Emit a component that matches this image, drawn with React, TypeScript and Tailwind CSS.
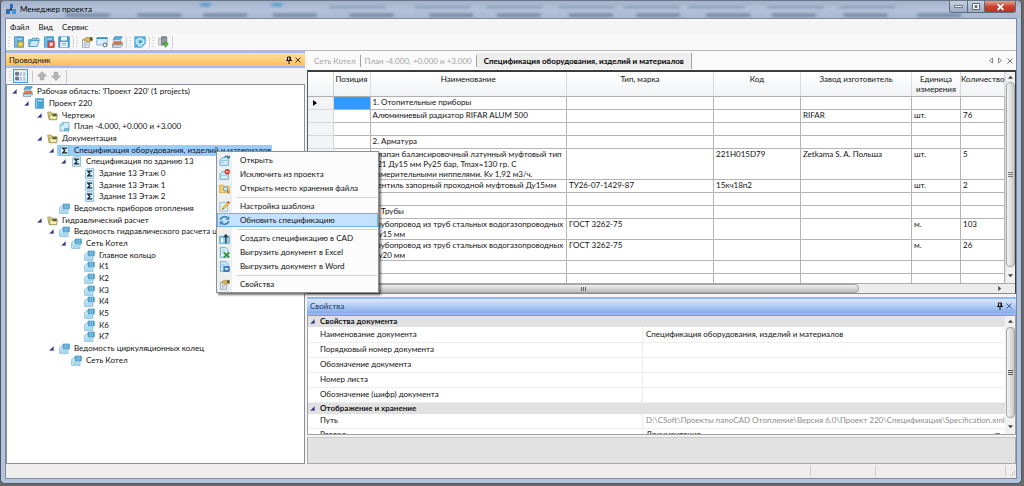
import { useState } from 'react';
import type { ReactNode } from 'react';

type IconName =
    | 'stack' | 'book' | 'folder' | 'sheet' | 'sigma' | 'report'
    | 'bookNew' | 'openFolder' | 'bookDelete' | 'save' | 'props' | 'window' | 'cad' | 'import'
    | 'tree' | 'up' | 'down'
    | 'open' | 'exclude' | 'locate' | 'template' | 'refresh' | 'toCad' | 'excel' | 'word';

const page = <path d="M4 1h10v14H2V4z" fill="#d8effb" stroke="#5fa9cf" />;
const blueSheet = <path d="M5 2h9.500v12.500H1.500V6z" fill="#d3edf9" stroke="#4f9fc8" />;
const blueBook = (
    <>
        <path d="M2 1h12v14H2z" fill="#4aa3d8" stroke="#3a8cc0" />
        <path d="M4 1v14" stroke="#c2e4f6" />
        <path d="M6 4h6" stroke="#eaf6fd" strokeWidth="1.500" />
    </>
);
const handCard = (
    <>
        <path d="M2 5h9v10H2z" fill="#eef1f6" stroke="#8290a3" />
        <path d="M4 9h5M4 11h5M4 13h3" stroke="#8fa3bd" />
        <path d="M3 5l4-3h8v4l-5 2-3-1z" fill="#dcb45c" stroke="#a38645" />
        <path d="M12 2h3v4h-3z" fill="#4a5a33" />
    </>
);

const ICONS: Record<IconName, ReactNode> = {
    stack: (
        <>
            <path d="M5 1h10l-3 4H3z" fill="#5cb0de" stroke="#2a7fb4" />
            <path d="M3 5h10v2H3z" fill="#fff" stroke="#8a9aa8" />
            <path d="M4 8h11l-2 3H2z" fill="#e8804a" stroke="#b85d33" />
            <path d="M2 12h11l2-2v3l-2 2H2z" fill="#eaf4fa" stroke="#4d7b9a" />
        </>
    ),
    book: blueBook,
    folder: (
        <>
            <path d="M1 3h5l1 2h7v9H3z" fill="#e2d684" stroke="#8c8546" />
            <path d="M4 7h11l-1 7H4z" fill="#f6efae" stroke="#8c8546" />
            <path d="M8 6h6v3H8z" fill="#4e5a3a" />
        </>
    ),
    sheet: (
        <>
            {blueSheet}
            <path d="M2 6h4V2" fill="none" stroke="#4f9fc8" />
            <path d="M8 11h6v3H8z" fill="#8ac8e6" stroke="#4f9fc8" />
        </>
    ),
    sigma: (
        <>
            {page}
            <path d="M11 5.500V4.500H5.500L8.500 8l-3 3.500H11v-1" fill="none" stroke="#10202c" strokeWidth="1.800" />
        </>
    ),
    report: (
        <>
            <path d="M1 7l3-3h9v11H1z" fill="#cdeaf7" stroke="#5aa8d0" />
            <path d="M6 1.500h9v7H6z" fill="#55a7d2" stroke="#3d8fbb" />
            <path d="M9 2v6M12 2v6" stroke="#a6d5ec" />
            <path d="M3 10.500h8M3 13h8" stroke="#7fc0e0" />
        </>
    ),
    bookNew: (
        <>
            {blueBook}
            <path d="M10 6l1.500 3 3.500.5-2.500 2.300.6 3.200-3.100-1.600L7 15l.600-3.200L5 9.500 8.500 9z" fill="#ffd84e" stroke="#e09a18" />
        </>
    ),
    openFolder: (
        <>
            <path d="M1 13V5h4l1-2h6v3" fill="#8fcbea" stroke="#2f85b5" />
            <path d="M1 14l3-8h11l-3 8z" fill="#c7e8f8" stroke="#2f85b5" />
            <path d="M12 2l3 2-1 2" fill="none" stroke="#2f85b5" />
        </>
    ),
    bookDelete: (
        <>
            {blueBook}
            <path d="M7 7h8v8H7z" fill="#e0503f" stroke="#b8382b" />
            <path d="M9 9l4 4M13 9l-4 4" stroke="#fff" strokeWidth="1.500" />
        </>
    ),
    save: (
        <>
            <path d="M1 1h14v14H1z" fill="#4a9fd0" stroke="#2f7fae" />
            <path d="M4 1h8v5H4z" fill="#e9f5fc" />
            <path d="M3 8h10v7H3z" fill="#f4fafd" />
            <path d="M5 10h6M5 12h6" stroke="#5aa5cf" />
        </>
    ),
    props: handCard,
    window: (
        <>
            <path d="M1 2h14v10H1z" fill="#d9eefa" stroke="#6aa3c6" />
            <path d="M1 3h14" stroke="#3b8fc2" strokeWidth="2" />
            <circle cx="12" cy="12" r="2.500" fill="#fff" stroke="#6b8397" strokeWidth="1.500" />
        </>
    ),
    cad: (
        <>
            <path d="M1 1h14v9l-5 5H1z" fill="#5eb6e6" stroke="#3f9bce" />
            <path d="M3 5h3v-2h4v2h3v5h-3v3H6v-3H3z" fill="#8fd0f2" stroke="#eef9ff" strokeWidth="1.200" />
            <path d="M7 6h3v3H7z" fill="#2f86bd" />
        </>
    ),
    import: (
        <>
            <path d="M2 3h5v9H2z" fill="#d9dcdf" stroke="#a9aeb2" />
            <path d="M6 1h7v11H6z" fill="#7f898e" stroke="#677075" />
            <path d="M8 3v8M11 3v8" stroke="#b4bcc1" />
            <path d="M10 8h3v2h2l-3.500 5L8 10h2z" fill="#58bd3b" stroke="#3c9228" />
        </>
    ),
    tree: (
        <>
            <path d="M1 2h4v4H1zM1 9h4v4H1z" fill="#7c8a96" stroke="#3d4b57" />
            <path d="M7 3h3M12 3h3M7 6h3M12 6h3M7 10h3M12 10h3M7 13h3M12 13h3" stroke="#5f7183" />
        </>
    ),
    up: <path d="M8 1l7 7h-4v6H5V8H1z" fill="#b3b3b3" stroke="#9c9c9c" />,
    down: <path d="M8 15l7-7h-4V2H5v6H1z" fill="#b3b3b3" stroke="#9c9c9c" />,
    open: (
        <>
            <path d="M1.500 7l3-3h9v11h-12z" fill="#d3edf9" stroke="#3b8fba" />
            <path d="M3 8h9M3 11h4" stroke="#6db6da" />
            <path d="M8 3c2-2 4-2 6 0M15 1v3h-3" fill="none" stroke="#27627f" strokeWidth="1.500" />
        </>
    ),
    exclude: (
        <>
            <path d="M1.500 7l3-3h9v11h-12z" fill="#d3edf9" stroke="#3b8fba" />
            <path d="M3 9h9" stroke="#6db6da" />
            <circle cx="12" cy="4" r="3.500" fill="#e8412c" stroke="#c02817" />
            <path d="M10 4h4" stroke="#fff" strokeWidth="1.500" />
        </>
    ),
    locate: (
        <>
            <path d="M1 3h5l1 2h8v9H1z" fill="#f5cf6c" stroke="#d29d38" />
            <circle cx="9.500" cy="8.500" r="3" fill="#d6efff" stroke="#7b9fb8" strokeWidth="1.500" />
            <path d="M12 11l3 4" stroke="#c06a22" strokeWidth="2" />
        </>
    ),
    template: (
        <>
            <path d="M1.500 2h11v13h-11z" fill="#e3f2fb" stroke="#6fa9ca" />
            <path d="M5 12l1-3 7-8 2 2-7 8z" fill="#f7c43a" stroke="#d99a2a" />
            <path d="M13 1l2 2" stroke="#d23c2b" strokeWidth="2.500" />
            <path d="M4 13l2-3 1 1z" fill="#33393e" />
        </>
    ),
    refresh: (
        <g fill="none" stroke="#3d86b4" strokeWidth="2.500">
            <path d="M2 7c1-5 8-6 11-2" />
            <path d="M14 9c-1 5-8 6-11 2" />
            <path d="M14 2v4h-4M2 14v-4h4" strokeWidth="2" />
        </g>
    ),
    toCad: (
        <>
            <path d="M1 5h14v10H1z" fill="#9dd2ec" stroke="#3b8fba" />
            <path d="M3 8h3v6H3z" fill="#eef9ff" />
            <path d="M10 15V5" stroke="#1f3a4a" strokeWidth="2" />
            <path d="M6 6l4-5 4 5z" fill="#1f3a4a" />
        </>
    ),
    excel: (
        <>
            <path d="M2 1h8l3 3v11H2z" fill="#e3f2fb" stroke="#3f93bd" />
            <path d="M4 5h5M4 8h3" stroke="#6db6da" />
            <path d="M7 8l8 7M15 8l-8 7" stroke="#2f9236" strokeWidth="2.500" />
        </>
    ),
    word: (
        <>
            <path d="M2 1h8l3 3v11H2z" fill="#d3edf9" stroke="#3f93bd" />
            <path d="M4 5h5M4 8h3" stroke="#6db6da" />
            <path d="M7 8h8v7H7z" fill="#3d83c4" stroke="#1f5d99" />
            <path d="M9 10l1 3 1-3 1 3 1-3" fill="none" stroke="#fff" />
        </>
    ),
};

const Icon = ({ name, size = 11 }: { name: IconName; size?: number }) => (
    <svg width={size} height={size} viewBox="0 0 16 16" className="shrink-0" aria-hidden="true">
        {ICONS[name]}
    </svg>
);

const Grip = () => (
    <svg width="2" height="11" viewBox="0 0 2 11" className="shrink-0" aria-hidden="true">
        <path d="M1 0v11" stroke="#b5b5b5" strokeWidth="1" strokeDasharray="1 2" />
    </svg>
);

const Pin = () => (
    <svg width="8" height="8" viewBox="0 0 8 8" aria-hidden="true">
        <path d="M2.500 1h3v3.500h-3z" fill="none" stroke="currentColor" />
        <path d="M5 1v3.500M1 4.500h6M4 5v3" stroke="currentColor" />
    </svg>
);

const Cross = () => (
    <svg width="8" height="8" viewBox="0 0 8 8" aria-hidden="true">
        <path d="M1.500 1.500l5 5M6.500 1.500l-5 5" stroke="currentColor" strokeWidth=".8" />
    </svg>
);

const Arrow = ({ d }: { d: string }) => (
    <svg width="5" height="5" viewBox="0 0 6 6" className="shrink-0" aria-hidden="true">
        <path d={d} fill="#444" />
    </svg>
);

const Expander = () => (
    <svg width="5" height="5" viewBox="0 0 5 5" className="shrink-0" aria-hidden="true">
        <path d="M4.500 .5v4h-4z" fill="#2c3180" stroke="#6a6fae" strokeWidth=".5" />
    </svg>
);

// Toolbar
interface Tool {
    icon: IconName;
    label: string;
}

const TOOL_GROUPS: Tool[][] = [
    [
        { icon: 'bookNew', label: 'Создать проект' },
        { icon: 'openFolder', label: 'Открыть проект' },
        { icon: 'bookDelete', label: 'Закрыть проект' },
        { icon: 'save', label: 'Сохранить' },
    ],
    [
        { icon: 'props', label: 'Свойства' },
        { icon: 'window', label: 'Настройки' },
        { icon: 'stack', label: 'Рабочая область' },
    ],
    [{ icon: 'cad', label: 'Чертеж' }],
    [{ icon: 'import', label: 'Импорт' }],
];

// Project tree, flattened
interface Node {
    level: number;
    icon: IconName;
    text: string;
    open?: boolean;
}

const INDENT = ['pl-[5px]', 'pl-[17px]', 'pl-[30px]', 'pl-[42px]', 'pl-[54px]', 'pl-[67px]'];

const NODES: Node[] = [
    { level: 0, icon: 'stack', text: "Рабочая область: 'Проект 220' (1 projects)", open: true },
    { level: 1, icon: 'book', text: 'Проект 220', open: true },
    { level: 2, icon: 'folder', text: 'Чертежи', open: true },
    { level: 3, icon: 'sheet', text: 'План -4.000, +0.000 и +3.000' },
    { level: 2, icon: 'folder', text: 'Документация', open: true },
    { level: 3, icon: 'sigma', text: 'Спецификация оборудования, изделий и материалов', open: true },
    { level: 4, icon: 'sigma', text: 'Спецификация по зданию 13', open: true },
    { level: 5, icon: 'sigma', text: 'Здание 13 Этаж 0' },
    { level: 5, icon: 'sigma', text: 'Здание 13 Этаж 1' },
    { level: 5, icon: 'sigma', text: 'Здание 13 Этаж 2' },
    { level: 3, icon: 'report', text: 'Ведомость приборов отопления' },
    { level: 2, icon: 'folder', text: 'Гидравлический расчет', open: true },
    { level: 3, icon: 'report', text: 'Ведомость гидравлического расчета циркуляционных колец', open: true },
    { level: 4, icon: 'report', text: 'Сеть Котел', open: true },
    { level: 5, icon: 'report', text: 'Главное кольцо' },
    { level: 5, icon: 'report', text: 'К1' },
    { level: 5, icon: 'report', text: 'К2' },
    { level: 5, icon: 'report', text: 'К3' },
    { level: 5, icon: 'report', text: 'К4' },
    { level: 5, icon: 'report', text: 'К5' },
    { level: 5, icon: 'report', text: 'К6' },
    { level: 5, icon: 'report', text: 'К7' },
    { level: 3, icon: 'report', text: 'Ведомость циркуляционных колец', open: true },
    { level: 4, icon: 'report', text: 'Сеть Котел' },
];

const HEADERS = ['Позиция', 'Наименование', 'Тип, марка', 'Код', 'Завод изготовитель', 'Единица измерения', 'Количество'];

interface Row {
    height: string;
    cells: string[];
}

const ROWS: Row[] = [
    { height: 'h-[13px]', cells: ['', '1. Отопительные приборы', '', '', '', '', ''] },
    { height: 'h-[13px]', cells: ['', 'Алюминиевый радиатор RIFAR ALUM 500', '', '', 'RIFAR', 'шт.', '76'] },
    { height: 'h-[13px]', cells: ['', '', '', '', '', '', ''] },
    { height: 'h-[13px]', cells: ['', '2. Арматура', '', '', '', '', ''] },
    { height: 'h-[31px]', cells: ['', 'Клапан балансировочный латунный муфтовый тип 221 Ду15 мм Ру25 бар, Tmax=130 гр. С измерительными ниппелями. Kv 1,92 м3/ч.', '', '221H015D79', 'Zetkama S. A. Польша', 'шт.', '5'] },
    { height: 'h-[13px]', cells: ['', 'Вентиль запорный проходной муфтовый Ду15мм', 'ТУ26-07-1429-87', '15кч18п2', '', 'шт.', '2'] },
    { height: 'h-[13px]', cells: ['', '', '', '', '', '', ''] },
    { height: 'h-[13px]', cells: ['', '3. Трубы', '', '', '', '', ''] },
    { height: 'h-[21px]', cells: ['', 'Трубопровод из труб стальных водогазопроводных Ду15 мм', 'ГОСТ 3262-75', '', '', 'м.', '103'] },
    { height: 'h-[21px]', cells: ['', 'Трубопровод из труб стальных водогазопроводных Ду20 мм', 'ГОСТ 3262-75', '', '', 'м.', '26'] },
    { height: 'h-[13px]', cells: ['', '', '', '', '', '', ''] },
    { height: 'h-[13px]', cells: ['', '', '', '', '', '', ''] },
];

const MENU: Tool[][] = [
    [
        { icon: 'open', label: 'Открыть' },
        { icon: 'exclude', label: 'Исключить из проекта' },
        { icon: 'locate', label: 'Открыть место хранения файла' },
    ],
    [
        { icon: 'template', label: 'Настройка шаблона' },
        { icon: 'refresh', label: 'Обновить спецификацию' },
    ],
    [
        { icon: 'toCad', label: 'Создать спецификацию в CAD' },
        { icon: 'excel', label: 'Выгрузить документ в Excel' },
        { icon: 'word', label: 'Выгрузить документ в Word' },
    ],
    [{ icon: 'props', label: 'Свойства' }],
];

const PROPERTY_GROUPS = [
    {
        title: 'Свойства документа',
        items: [
            { name: 'Наименование документа', value: 'Спецификация оборудования, изделий и материалов' },
            { name: 'Порядковый номер документа', value: '' },
            { name: 'Обозначение документа', value: '' },
            { name: 'Номер листа', value: '' },
            { name: 'Обозначение (шифр) документа', value: '' },
        ],
    },
    {
        title: 'Отображение и хранение',
        items: [
            { name: 'Путь', value: 'D:\\CSoft\\Проекты nanoCAD Отопление\\Версия 6.0\\Проект 220\\Спецификация\\Specification.xml', readOnly: true },
        ],
    },
];

const TitleBar = () => (
    <header className="relative flex h-[17px] shrink-0 items-start overflow-hidden bg-linear-to-b from-[#a3b3cb] via-[#b3c2d9] to-[#a9b9d2]">
        {/* Glass with the ribbon behind showing through */}
        <svg className="absolute inset-0 h-full w-full" preserveAspectRatio="none" viewBox="0 0 1024 18" aria-hidden="true">
            <defs>
                <filter id="glass"><feGaussianBlur stdDeviation="1.4" /></filter>
            </defs>
            <g filter="url(#glass)" fill="#5f7390" opacity=".6">
                {[65, 137, 203, 273, 350, 430, 498, 570, 638, 708, 774, 846, 920].map((x) => (
                    <rect key={x} x={x} y="13" width="44" height="4" />
                ))}
                {[200, 272].map((x) => <rect key={x} x={x} y="2" width="10" height="4" fill="#2f8fd0" />)}
                {[330, 415, 487, 560, 625, 690, 770, 842].map((x) => (
                    <rect key={x} x={x} y="5" width="56" height="3" opacity=".6" />
                ))}
            </g>
        </svg>
        <div className="relative flex flex-1 items-center gap-[4px] pl-[5px]">
            <svg width="10" height="12" viewBox="0 0 10 12" aria-hidden="true">
                <path d="M5 1v5M2 9l3-3 3 3" stroke="#1c2c45" strokeWidth="1.500" fill="none" />
                <path d="M4 1h3v4H4zM0 6h4v5H0z" fill="#2d6bb4" />
                <path d="M6 6h4v5H6z" fill="#4c93d6" />
            </svg>
            <h1 className="text-[8px] leading-[16px] text-black">Менеджер проекта</h1>
        </div>
        <div className="relative mr-[5px] flex h-[12px] overflow-hidden rounded-b-[3px] border border-t-0 border-[#5e6a7d]">
            <button aria-label="Свернуть" className="flex w-[18px] items-center justify-center border-r border-[#5e6a7d] bg-linear-to-b from-[#c6d0e0] to-[#9eacc3]">
                <svg width="9" height="5" viewBox="0 0 9 5"><path d="M.5 1.500h8v2h-8z" fill="#fff" stroke="#6b7588" /></svg>
            </button>
            <button aria-label="Развернуть" className="flex w-[17px] items-center justify-center border-r border-[#5e6a7d] bg-linear-to-b from-[#c6d0e0] to-[#9eacc3]">
                <svg width="8" height="7" viewBox="0 0 8 7"><path d="M.5.5h7v6h-7z" fill="#fff" stroke="#5b6578" /><path d="M3 2.500h2v2H3z" fill="#8795ab" stroke="#5b6578" /></svg>
            </button>
            <button aria-label="Закрыть" className="flex w-[30px] items-center justify-center bg-linear-to-b from-[#e2a293] via-[#c9442e] to-[#b83420]">
                <svg width="9" height="8" viewBox="0 0 9 8"><path d="M1.500 1l6 6M7.500 1l-6 6" stroke="#8b3428" strokeWidth="3" /><path d="M1.500 1l6 6M7.500 1l-6 6" stroke="#fff" strokeWidth="1.800" /></svg>
            </button>
        </div>
    </header>
);

const Explorer = ({ selected, onSelect }: { selected: number; onSelect: (i: number) => void }) => (
    <section className="flex w-[30%] min-w-[298px] max-w-[299px] flex-col bg-[#f4f4f4]">
        <div className="flex h-[17px] shrink-0 items-center border-y-2 border-[#9dbbfa] bg-linear-to-b from-[#ffe0a4] to-[#fdbe55] pr-[3px] pl-[3px]">
            <h2 className="flex-1 text-[8px] leading-[12px]">Проводник</h2>
            <button aria-label="Закрепить"><Pin /></button>
            <button aria-label="Закрыть панель" className="ml-px"><Cross /></button>
        </div>
        <div className="flex h-[16px] shrink-0 items-center gap-[2px] pl-[3px]">
            <Grip />
            <button aria-label="Дерево" className="flex h-[14px] w-[15px] items-center justify-center border border-[#3c9bf0] bg-[#e4f1fd]">
                <Icon name="tree" />
            </button>
            <span className="mx-[2px] h-[11px] w-px bg-[#c8c8c8]" />
            <button aria-label="Вверх" className="mr-[2px]"><Icon name="up" size={10} /></button>
            <button aria-label="Вниз"><Icon name="down" size={10} /></button>
            <span className="ml-[3px] h-[13px] w-px bg-[#c8c8c8]" />
        </div>
        <div className="flex-1 overflow-hidden border border-[#8e8f99] bg-white">
            <ul role="tree" className="grid h-[281px] auto-rows-fr pt-px">
                {NODES.map((node, i) => (
                    <li
                        key={i}
                        role="treeitem"
                        aria-level={node.level + 1}
                        aria-selected={i === selected}
                        onClick={() => onSelect(i)}
                        className={`flex min-h-0 items-center ${INDENT[node.level]}`}
                    >
                        <span className="w-[8px] shrink-0">{node.open && <Expander />}</span>
                        <span className={`flex shrink-0 items-center gap-[4px] pr-px pl-[2px] ${i === selected ? 'bg-[#99ccff]' : ''}`}>
                            <Icon name={node.icon} />
                            <span className="text-[8px] leading-[11px] whitespace-nowrap">{node.text}</span>
                        </span>
                    </li>
                ))}
            </ul>
        </div>
    </section>
);

const SpecTable = () => (
    <div className="flex min-h-0 flex-1 flex-col border-t-2 border-r border-b border-l border-[#3c3c3c] border-b-[#8a8a8a] border-l-[#55585c] bg-white">
        <div className="flex min-h-0 flex-1">
            <div className="min-w-0 flex-1 overflow-hidden">
                <table className="w-full table-fixed border-collapse text-[8px] leading-[10px]">
                    <colgroup>
                        <col className="w-[25px]" />
                        <col className="w-[37px]" />
                        <col />
                        <col className="w-[147px]" />
                        <col className="w-[87px]" />
                        <col className="w-[111px]" />
                        <col className="w-[49px]" />
                        <col className="w-[44px]" />
                    </colgroup>
                    <thead>
                        <tr className="h-[24px] bg-linear-to-b from-white to-[#f1f2f4] align-top">
                            <th className="border-r border-b border-[#d0d0d0] border-b-[#b0b0b0]" />
                            {HEADERS.map((h) => (
                                <th key={h} className="border-r border-b border-[#dcdcdc] border-b-[#b0b0b0] pt-[2px] font-normal">
                                    {h}
                                </th>
                            ))}
                        </tr>
                    </thead>
                    <tbody>
                        {ROWS.map((row, i) => (
                            <tr key={i} className={`${row.height} align-top`}>
                                <td className="border-r border-b border-[#d8d8d8] bg-[#f3f4f6] pt-[3px] pl-[5px]">
                                    {i === 0 && (
                                        <svg width="4" height="6" viewBox="0 0 4 6" aria-hidden="true"><path d="M0 0l4 3-4 3z" fill="#000" /></svg>
                                    )}
                                </td>
                                {row.cells.map((cell, j) => (
                                    <td
                                        key={j}
                                        className={`border-r border-b border-[#b4b4b4] pl-[2px] ${i === 0 && j === 0 ? 'bg-[#3399ff]' : ''}`}
                                    >
                                        {cell}
                                    </td>
                                ))}
                            </tr>
                        ))}
                    </tbody>
                </table>
            </div>
            <div className="flex w-[10px] flex-col items-center border-l border-[#e0e0e0] bg-[#f0f0f0]">
                <span className="flex h-[10px] items-center"><Arrow d="M0 4.500h6L3 1z" /></span>
                <span className="flex w-[9px] flex-1 items-center justify-center rounded-sm border border-[#a5a5a5] bg-linear-to-r from-[#f6f6f6] to-[#c9c9c9]">
                    <svg width="5" height="6" viewBox="0 0 5 6"><path d="M0 .5h5M0 2.500h5M0 4.500h5" stroke="#777" /></svg>
                </span>
                <span className="flex h-[16px] items-center"><Arrow d="M0 1.500h6L3 5z" /></span>
            </div>
        </div>
        <div className="flex h-[10px] shrink-0 border-t border-[#aaa] bg-[#ececec]">
            <span className="flex w-[78%] items-center justify-center rounded-sm border border-[#a5a5a5] bg-linear-to-b from-[#f0f0f0] to-[#bdbdbd]">
                <svg width="6" height="4" viewBox="0 0 6 4"><path d="M.5 0v4M2.500 0v4M4.500 0v4" stroke="#666" /></svg>
            </span>
            <span className="flex flex-1 items-center justify-end pr-[13px]"><Arrow d="M1.500 0v6L5 3z" /></span>
        </div>
    </div>
);

const Properties = () => (
    <section className="mt-[3px] flex h-[167px] shrink-0 flex-col">
        <div className="flex h-[18px] shrink-0 items-center border-y-2 border-[#94b6fb] bg-linear-to-b from-[#dce9fd] to-[#86ace8] pr-[3px] pl-[3px]">
            <h2 className="flex-1 text-[8px] leading-[12px] text-[#1c3a66]">Свойства</h2>
            <button aria-label="Закрепить свойства"><Pin /></button>
            <button aria-label="Закрыть свойства" className="ml-px text-[#24406c]"><Cross /></button>
        </div>
        <div className="flex min-h-0 flex-1 overflow-hidden border border-[#a0a0a0] border-t-[#999] bg-white">
            <div className="min-w-0 flex-1">
                <table className="w-full table-fixed border-collapse text-[8px] leading-[11px]">
                    <colgroup>
                        <col className="w-[48%]" />
                        <col />
                    </colgroup>
                    {PROPERTY_GROUPS.map((group) => (
                        <tbody key={group.title}>
                            <tr className="h-[11px] bg-[#e1e1e1]">
                                <th colSpan={2} className="text-left font-bold">
                                    <span className="flex items-center gap-[5px] pl-[2px]">
                                        <Expander />
                                        {group.title}
                                    </span>
                                </th>
                            </tr>
                            {group.items.map((item) => (
                                <tr key={item.name} className="h-[15px] border-b border-[#eeeeee]">
                                    <td className="border-r border-[#eeeeee] pl-[12px]">{item.name}</td>
                                    <td className={`pl-[3px] whitespace-nowrap ${'readOnly' in item ? 'text-[#8c8c8c]' : ''}`}>{item.value}</td>
                                </tr>
                            ))}
                        </tbody>
                    ))}
                    <tbody>
                        <tr className="h-[15px] align-top">
                            <td className="border-r border-[#eeeeee] pl-[12px]"><label htmlFor="section">Раздел</label></td>
                            <td className="pl-[3px]">
                                <span className="flex items-center pr-[5px]">
                                    <select id="section" className="flex-1 appearance-none bg-transparent">
                                        <option>Документация</option>
                                        <option>Чертежи</option>
                                    </select>
                                    <Arrow d="M0 1.500h6L3 5z" />
                                </span>
                            </td>
                        </tr>
                    </tbody>
                </table>
            </div>
            <div className="flex w-[10px] shrink-0 flex-col items-center bg-[#f0f0f0]">
                <span className="flex h-[11px] items-center"><Arrow d="M0 4.500h6L3 1z" /></span>
                <span className="flex w-[9px] flex-1 items-center justify-center rounded-sm border border-[#a5a5a5] bg-linear-to-r from-[#f6f6f6] to-[#c9c9c9]">
                    <svg width="5" height="6" viewBox="0 0 5 6"><path d="M0 .5h5M0 2.500h5M0 4.500h5" stroke="#555" /></svg>
                </span>
                <span className="flex h-[16px] items-center"><Arrow d="M0 1.500h6L3 5z" /></span>
            </div>
        </div>
        <div className="mt-[2px] h-[27px] shrink-0 border border-[#a8a8a8] border-t-[#c8c8c8] bg-[#e2e2e2]" />
    </section>
);

const ContextMenu = () => {
    const [active, setActive] = useState('Обновить спецификацию');

    return (
        <div
            role="menu"
            className="absolute top-[151px] left-[216px] w-[163px] border border-[#8f8f8f] bg-linear-to-r from-[#eceff0] from-[15px] to-[#fcfcfc] to-[15px] py-px shadow-[2px_2px_2px_rgba(0,0,0,0.55)]"
        >
            {MENU.map((section, i) => (
                <div key={i}>
                    {i > 0 && <div role="separator" className="mt-[2px] mr-px ml-[20px] h-[2px] border-t border-[#d2d2d2]" />}
                    {section.map((item) => (
                        <button
                            key={item.label}
                            role="menuitem"
                            onMouseEnter={() => setActive(item.label)}
                            className={`flex h-[14px] w-full items-center gap-[10px] border pl-px text-[8px] leading-[12px] whitespace-nowrap ${active === item.label ? 'border-[#66b2f5] bg-[#c4e1ff]' : 'border-transparent'}`}
                        >
                            <Icon name={item.icon} />
                            {item.label}
                        </button>
                    ))}
                </div>
            ))}
        </div>
    );
};

export default function App() {
    const [selected, setSelected] = useState(5);
    const [tab, setTab] = useState(2);

    return (
        <div className="relative flex h-screen flex-col overflow-hidden bg-[#6a6868] pr-[2px] pb-[2px] font-[Lato,'Open_Sans',sans-serif] text-[#111]">
            <div className="flex min-h-0 flex-1 flex-col overflow-hidden rounded-[5px] border border-[#4d5563] border-t-[#6b7688] bg-[#b3c4de]">
                <TitleBar />
                <div className="mx-[4px] mb-[4px] flex min-h-0 flex-1 flex-col border border-[#7d8899] bg-[#f4f4f4]">
                    <nav className="flex h-[15px] shrink-0 items-center gap-[9px] bg-[#f5f5f5] pl-[4px] text-[8px] leading-[12px]">
                        {['Файл', 'Вид', 'Сервис'].map((m) => <button key={m}>{m}</button>)}
                    </nav>
                    <div className="flex h-[17px] shrink-0 items-center border-b border-[#b9b9b9] bg-[#f8f8f8]">
                        {TOOL_GROUPS.map((group, i) => (
                            <div key={i} className="flex h-[14px] items-center gap-[3px] rounded-r border-r border-[#d4d4d4] pr-[3px] pl-[2px]">
                                <Grip />
                                {group.map((tool) => (
                                    <button key={tool.label} aria-label={tool.label}><Icon name={tool.icon} size={12} /></button>
                                ))}
                            </div>
                        ))}
                    </div>
                    <div className="flex min-h-0 flex-1 gap-[2px]">
                        <Explorer selected={selected} onSelect={setSelected} />
                        <main className="flex min-w-0 flex-1 flex-col">
                            <div className="flex h-[19px] shrink-0 items-center bg-[#fafafa] text-[8px] leading-[12px]">
                                {['Сеть Котел', 'План -4.000, +0.000 и +3.000', 'Спецификация оборудования, изделий и материалов'].map((t, i) => (
                                    <button
                                        key={t}
                                        onClick={() => setTab(i)}
                                        className={i === tab
                                            ? 'h-[16px] border-r border-[#a0a0a0] bg-[#eeeeee] px-[7px] font-bold text-black'
                                            : 'h-[12px] border-r border-[#a0a0a0] pr-[4px] pl-[4px] text-[#a3a3a3] first:pl-[7px]'}
                                    >
                                        {t}
                                    </button>
                                ))}
                                <span className="flex-1" />
                                <span className="flex items-center gap-[3px] pr-[2px] text-[#555]">
                                    <button aria-label="Назад"><svg width="6" height="7" viewBox="0 0 6 7"><path d="M4.500 1v5L1.500 3.500z" fill="none" stroke="#888" /></svg></button>
                                    <button aria-label="Вперед"><svg width="6" height="7" viewBox="0 0 6 7"><path d="M1.500 1v5l3-2.500z" fill="none" stroke="#888" /></svg></button>
                                    <button aria-label="Закрыть вкладку"><Cross /></button>
                                </span>
                            </div>
                            <SpecTable />
                            <Properties />
                        </main>
                    </div>
                    <footer className="flex h-[14px] shrink-0 justify-end bg-[#f0eeed] py-px">
                        <span className="w-[65px] border-l border-[#d0d0d0]" />
                        <span className="w-[130px] border-l border-[#d0d0d0]" />
                        <span className="flex w-[11px] items-end justify-end border-l border-[#d0d0d0]">
                            <svg width="7" height="7" viewBox="0 0 7 7"><path d="M5 1h1M3 3h1M5 3h1M1 5h1M3 5h1M5 5h1" stroke="#b0b0b0" /></svg>
                        </span>
                    </footer>
                </div>
            </div>
            <ContextMenu />
        </div>
    );
}
